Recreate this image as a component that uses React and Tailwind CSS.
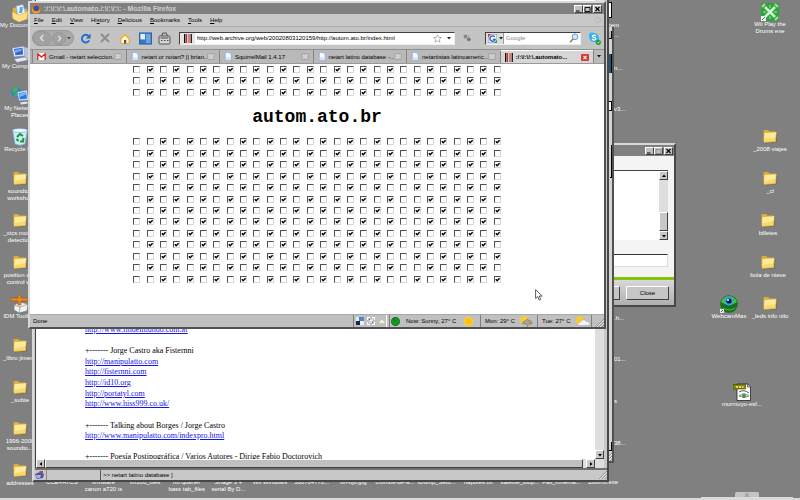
import React from "react";

const UI_FONT = "font-['Liberation_Sans',Arial,sans-serif]";

/* ---------- Desktop icons ---------- */

function Folder() {
  return (
    <svg viewBox="0 0 16 15" className="h-[15px] w-[16px]">
      <path d="M3 14.500 L14.500 13.500 L15.500 5 L14 4 Z" fill="#4d4d4d" opacity=".5" />
      <path d="M1.500 2 Q1.500 1 2.500 1 H6 L7.500 2.500 H13 Q14 2.500 14 3.500 V12 H1.500 Z" fill="#dcae3c" />
      <path d="M2.500 4 L14.500 3.200 L13.700 12.800 L2 13.500 Z" fill="#fdeb9c" />
      <path d="M2.500 10 L14 8 L13.700 12.800 L2 13.500 Z" fill="#f8d96c" />
      <path d="M14.500 3.200 L13.700 12.800 L2 13.500" fill="none" stroke="#b98a2b" strokeWidth=".6" />
    </svg>
  );
}

function Documents() {
  return (
    <svg viewBox="0 0 18 18" className="h-[18px] w-[18px]">
      <path d="M2 4 L8 3 L16 5 L17 15 L8 18 L1 14 Z" fill="#e0b23c" />
      <path d="M5 2 L12 0.500 L15 10 L7 13 Z" fill="#eaf4ff" stroke="#6ba0d8" strokeWidth=".7" />
      <path d="M9 3 L12 3 L11 9 L8 9 Z" fill="#5aa9e6" />
      <path d="M1 8 L9 11 L17 7 L16 15 L8 18 L2 15 Z" fill="#fbe08a" stroke="#cf9c30" strokeWidth=".5" />
    </svg>
  );
}

function Computer() {
  return (
    <svg viewBox="0 0 18 18" className="h-[18px] w-[18px]">
      <path d="M1 3 L13 1 L14 11 L3 12 Z" fill="#dfe6f5" stroke="#6a7bb0" strokeWidth=".6" />
      <path d="M3 4 L11.500 2.700 L12 9.500 L4.500 10.300 Z" fill="#3264c8" />
      <path d="M4 5 L11 3.500 L10 6 L4 8 Z" fill="#79a9f0" />
      <path d="M13 2 L17 3 V14 L14 15 Z" fill="#b9c2dd" />
      <path d="M3 14 L14 12 L17 15 L6 17.500 Z" fill="#e7eaf4" stroke="#7783a8" strokeWidth=".5" />
    </svg>
  );
}

function Network() {
  return (
    <svg viewBox="0 0 18 18" className="h-[18px] w-[18px]">
      <circle cx="5" cy="5" r="5" fill="#2d86d8" />
      <path d="M1 3 Q4 -1 7 1 Q6 5 3 6 Z M3 7 L8 5 L8 9 L4 9 Z" fill="#49b53c" />
      <path d="M6 5 L16 3 L17.500 13 L8 14 Z" fill="#dfe8f5" stroke="#5f78b2" strokeWidth=".6" />
      <path d="M7.500 6.200 L15 4.700 L16 11.500 L9 12.400 Z" fill="#2a78dc" />
      <path d="M8 7 L15 5 L15.300 7 L9 10 Z" fill="#74c1f7" />
      <path d="M9 15.500 L16 14.500 L17 16.500 L10 17.500 Z" fill="#e0e4ee" />
    </svg>
  );
}

function RecycleBin() {
  return (
    <svg viewBox="0 0 18 18" className="h-[18px] w-[18px]">
      <path d="M1.500 2 L16.500 2 L14 16 Q9 18.500 4 16 Z" fill="#cfeaf8" stroke="#6aa8cc" strokeWidth=".7" />
      <ellipse cx="9" cy="2.500" rx="7.500" ry="2" fill="#f0faff" stroke="#65a5cc" strokeWidth=".6" />
      <path d="M6 9 L9 6 L12 8 M12.500 10 L12 13.500 L9 13.500 M7.500 13 L5.500 11" fill="none" stroke="#159a34" strokeWidth="2" />
    </svg>
  );
}

function Toolbox() {
  return (
    <svg viewBox="0 0 18 18" className="h-[18px] w-[18px]">
      <path d="M3 10 L9 7 L17 9 L16 16 L8 18 L3 15 Z" fill="#f2f2f2" stroke="#6d6d6d" strokeWidth=".6" />
      <path d="M3 10 L9 12 L17 9 M9 12 L8 18" fill="none" stroke="#8a8a8a" strokeWidth=".7" />
      <path d="M7 0 H10 V3 H17 V6 H10 V10 H7 V6 H0 V3 H7 Z" fill="#e58a24" stroke="#9c5208" strokeWidth=".6" />
    </svg>
  );
}

function WiiDrums() {
  return (
    <svg viewBox="0 0 18 18" className="h-[18px] w-[18px]">
      <rect width="18" height="18" fill="#2fa33a" />
      <path d="M4 4 L14 14 M14 4 L4 14" stroke="#d4f0d4" strokeWidth="2.600" />
      <path d="M1 4 L4 1 M14 1 L17 4 M17 14 L14 17" stroke="#a5dfa8" strokeWidth="2" />
      <path d="M9 2 V5 M9 13 V16 M2 9 H5 M13 9 H16" stroke="#66c46c" strokeWidth="2" />
      <path d="M0 13 H5 V18 H0 Z" fill="#eef8ee" />
      <path d="M1 17 L4 14" stroke="#555" strokeWidth=".8" />
    </svg>
  );
}

function Webcam() {
  return (
    <svg viewBox="0 0 18 18" className="h-[18px] w-[18px]">
      <circle cx="9" cy="9" r="8.800" fill="#17701c" />
      <path d="M1 7 A8.500 8.500 0 0 1 17 7 Q9 13 1 7" fill="#4cc03e" />
      <circle cx="9" cy="6" r="4.600" fill="#2fa4e6" />
      <circle cx="9" cy="6" r="2.600" fill="#0b1a38" />
      <circle cx="8" cy="5" r="1" fill="#fff" />
      <path d="M3 13 Q9 17 15 13" fill="none" stroke="#58b83c" />
      <path d="M0 14 H4 V18 H0 Z" fill="#e6e6e6" />
      <path d="M1 17 L3 15" stroke="#333" strokeWidth=".8" />
    </svg>
  );
}

function JpgFile() {
  return (
    <svg viewBox="0 0 18 18" className="h-[18px] w-[18px]">
      <path d="M4 1 H15 L17.500 3.500 V17.500 H4 Z" fill="#fff" stroke="#222" strokeWidth=".8" />
      <path d="M14.500 1 V4 H17.500" fill="#ccc" stroke="#222" strokeWidth=".6" />
      <rect x="0" y="1.500" width="12.500" height="4.500" fill="#8a8a00" stroke="#3c3c00" strokeWidth=".6" />
      <path d="M3 4 H5 M6 4 H8 M9 4 H10.500" fill="none" stroke="#f2f2a8" strokeWidth="1.400" />
      <path d="M6 9 Q11 6 16 10" fill="none" stroke="#444" strokeWidth=".9" />
      <path d="M6 13 Q11 8.500 16 13 Q11 16 6 13 Z" fill="#d9eed9" stroke="#444" strokeWidth=".6" />
      <circle cx="11" cy="12.800" r="1.900" fill="#2d9a3a" />
    </svg>
  );
}

const shortcuts = [
  { place: "left-[-20px] top-[3px]", Art: Documents, label: ["My Documents"] },
  { place: "left-[-20px] top-[44px]", Art: Computer, label: ["My Computer"] },
  { place: "left-[-20px] top-[86px]", Art: Network, label: ["My Network", "Places"] },
  { place: "left-[-20px] top-[127px]", Art: RecycleBin, label: ["Recycle Bin"] },
  { place: "left-[-20px] top-[169px]", Art: Folder, label: ["soundtoy", "workshop"] },
  { place: "left-[-20px] top-[211px]", Art: Folder, label: ["_xtcs motion", "detection"] },
  { place: "left-[-20px] top-[253px]", Art: Folder, label: ["position and", "control wii"] },
  { place: "left-[-20px] top-[294px]", Art: Toolbox, label: ["IDM Toolbox"] },
  { place: "left-[-20px] top-[336px]", Art: Folder, label: ["_libro jimena"] },
  { place: "left-[-20px] top-[378px]", Art: Folder, label: ["_subte"] },
  { place: "left-[-20px] top-[419px]", Art: Folder, label: ["1996-2008", "soundto..."] },
  { place: "left-[-20px] top-[461px]", Art: Folder, label: ["addresses"] },
  { place: "left-[730px] top-[2px]", Art: WiiDrums, label: ["Wii Play the", "Drums exe"] },
  { place: "left-[730px] top-[127px]", Art: Folder, label: ["_2008 viajes"] },
  { place: "left-[730px] top-[169px]", Art: Folder, label: ["_cl"] },
  { place: "left-[728px] top-[211px]", Art: Folder, label: ["billetes"] },
  { place: "left-[728px] top-[253px]", Art: Folder, label: ["bola de nieve"] },
  { place: "left-[730px] top-[294px]", Art: Folder, label: ["_leds info nilo"] },
  { place: "left-[689px] top-[294px]", Art: Webcam, label: ["WebcamMax"] },
  { place: "left-[702px] top-[382px]", Art: JpgFile, label: ["murmuyo-esf..."] },
];

function Shortcut({ place, Art, label }) {
  return (
    <div className={`absolute flex w-20 flex-col items-center ${place}`}>
      <div className="flex h-[19px] items-center"><Art /></div>
      <div className="text-center leading-[7px] whitespace-nowrap">
        {label.map((line) => <div key={line}>{line}</div>)}
      </div>
    </div>
  );
}

const bottomRow = [
  ["CCE+ATCS"], ["firmware", "canon a720 is"], ["im100_files"], ["no quarter", "bass tab_files"],
  ["Shage 3 +", "serial By D..."], ["Wii Windows"], ["100704770..."], ["bri-ojo.jpg"],
  ["cromos-de-a..."], ["IDump_Setu..."], ["napoles.txt"], ["satelite_loop..."],
  ["Fall_Kinema..."], ["ZoomIt.exe"],
];

const cutLabels = [
  { place: "top-[31px]", text: "..." },
  { place: "top-[64px]", text: "n..." },
  { place: "top-[105px]", text: "v3..." },
  { place: "top-[314px]", text: ".h..." },
  { place: "top-[355px]", text: "01..." },
  { place: "top-[397px]", text: "s" },
  { place: "top-[439px]", text: "38..." },
];

/* ---------- Window parts ---------- */

function CaptionButtons({ dimMiddle }) {
  const base = "grid h-[8px] w-[9px] place-items-center border border-t-white border-l-white border-r-[#404040] border-b-[#404040] bg-[#c0c0c0]";
  const ink = dimMiddle ? "#8c8c8c" : "#000";
  return (
    <div className="flex">
      <button aria-label="Minimize" className={base}>
        <svg viewBox="0 0 7 6" className="h-[6px] w-[7px]"><path d="M1 5 H4.500" stroke="#000" /></svg>
      </button>
      <button aria-label="Maximize" className={base}>
        <svg viewBox="0 0 7 6" className="h-[6px] w-[7px]"><path d="M1 1.500 H6 V5.500 H1 Z" fill="none" stroke={ink} strokeWidth=".9" /></svg>
      </button>
      <button aria-label="Close window" className={`ml-px ${base}`}>
        <svg viewBox="0 0 7 6" className="h-[6px] w-[7px]"><path d="M1.500 1 L5.500 5 M5.500 1 L1.500 5" stroke="#000" strokeWidth="1.100" /></svg>
      </button>
    </div>
  );
}

function ScrollButton({ dir, label }) {
  const d = { up: "M1 4 L3 1.500 L5 4 Z", down: "M1 2 L3 4.500 L5 2 Z", left: "M4 1 L1.500 3 L4 5 Z", right: "M2 1 L4.500 3 L2 5 Z" }[dir];
  return (
    <button aria-label={label} className="grid h-[9px] w-[9px] shrink-0 place-items-center border border-t-white border-l-white border-r-[#404040] border-b-[#404040] bg-[#c8c8c8]">
      <svg viewBox="0 0 6 6" className="h-[6px] w-[6px]"><path d={d} fill="#000" /></svg>
    </button>
  );
}

function Grip() {
  return (
    <svg viewBox="0 0 8 8" className="h-[8px] w-[8px]">
      <path d="M0 8 L8 0 M3 8 L8 3 M6 8 L8 6" stroke="#808080" strokeWidth=".8" />
      <path d="M1 8 L8 1 M4 8 L8 4" stroke="#fff" strokeWidth=".6" />
    </svg>
  );
}

/* ---------- Firefox ---------- */

const menus = ["File", "Edit", "View", "History", "Delicious", "Bookmarks", "Tools", "Help"];
const accessKey = { History: 2 };

function MenuItem({ name }) {
  const k = accessKey[name] ?? 0;
  return (
    <button>
      {name.slice(0, k)}<span className="underline">{name[k]}</span>{name.slice(k + 1)}
    </button>
  );
}

function Page() {
  return (
    <svg viewBox="0 0 8 10" className="h-[9px] w-[8px] shrink-0">
      <path d="M1 .5 H5.500 L7.500 2.500 V9.500 H1 Z" fill="#f5faff" stroke="#7ba3d8" strokeWidth=".7" />
      <path d="M1.500 6 H7 V9 H1.500 Z" fill="#cfe2fb" />
      <path d="M5.500 .5 V2.500 H7.500" fill="#b5d0f5" />
    </svg>
  );
}

function GmailMark() {
  return (
    <svg viewBox="0 0 9 7" className="h-[7px] w-[9px] shrink-0">
      <rect width="9" height="7" fill="#fff" />
      <path d="M.8 7 V.8 L4.500 4 L8.200 .8 V7" fill="none" stroke="#d8281e" strokeWidth="1.400" />
    </svg>
  );
}

function RedBars() {
  return (
    <svg viewBox="0 0 8 9" className="h-[9px] w-[8px] shrink-0">
      <rect width="8" height="9" fill="#fff" />
      <rect width="1.500" height="9" fill="#111" />
      <rect x="2" width="1" height="9" fill="#b33" />
      <rect x="3.500" width="2.500" height="9" fill="#d98080" />
      <rect x="6.500" width="1.500" height="9" fill="#222" />
    </svg>
  );
}

const tabs = [
  { Mark: GmailMark, title: "Gmail - netart seleccion..." },
  { Mark: Page, title: "netart or notart? || brian..." },
  { Mark: Page, title: "SquirrelMail 1.4.17" },
  { Mark: Page, title: "netart latino database -..." },
  { Mark: Page, title: "netartistas latinoameric..." },
  { Mark: RedBars, title: ":/:\\/:\\/:\\.automato...", active: true },
];

function Tab({ Mark, title, active }) {
  return (
    <div className={`flex min-w-0 flex-1 items-center gap-[3px] border-l border-l-[#858585] px-[4px] ${active ? "border-t border-t-white bg-[#d6d6d6] font-bold" : "bg-[#b9b9b9]"}`}>
      <Mark />
      <button className="min-w-0 flex-1 text-left whitespace-nowrap">{title}</button>
      <button aria-label={`Close tab ${title}`} className={`grid h-[7px] w-[8px] shrink-0 place-items-center rounded-[1px] ${active ? "bg-[#d83a32]" : "border border-[#a6a6a6] bg-[#c4c4c4]"}`}>
        <svg viewBox="0 0 6 5" className="h-[5px] w-[6px]">
          <path d="M1.500 .8 L4.500 4.200 M4.500 .8 L1.500 4.200" stroke={active ? "#fff" : "#d4d4d4"} strokeWidth="1.100" />
        </svg>
      </button>
    </div>
  );
}

const oddRow = [1, 3, 5, 7, 9, 11, 13, 15, 17, 19, 22, 24, 26];
const evenRow = [2, 4, 6, 8, 10, 12, 14, 16, 18, 21, 23, 25, 27];

function CheckGrid({ rows, startEven, size }) {
  const cells = [];
  for (let r = 0; r < rows; r++) {
    const marked = (r % 2 === 0) === startEven ? evenRow : oddRow;
    for (let c = 0; c < 28; c++) {
      cells.push(
        <span key={`${r}-${c}`} className="grid place-items-center">
          <input
            type="checkbox"
            aria-label={`Row ${r + 1}, box ${c + 1}`}
            defaultChecked={marked.includes(c)}
            className="peer col-start-1 row-start-1 h-[7px] w-[7px] appearance-none border border-t-[#505050] border-l-[#505050] border-r-[#d8d8d8] border-b-[#d8d8d8] bg-white"
          />
          <svg viewBox="0 0 7 7" className="pointer-events-none col-start-1 row-start-1 hidden h-[7px] w-[7px] peer-checked:block">
            <path d="M1.800 3.200 L3.200 4.800 L5.600 2.200" fill="none" stroke="#000" strokeWidth="1.400" />
          </svg>
        </span>
      );
    }
  }
  return <div className={`grid w-[374px] auto-rows-fr grid-cols-28 ${size}`}>{cells}</div>;
}

function Sun() {
  return (
    <svg viewBox="0 0 12 12" className="h-[11px] w-[11px] shrink-0">
      <circle cx="6" cy="6" r="5.300" fill="#f6d04a" opacity=".8" />
      <circle cx="6" cy="6" r="3.800" fill="#ffc400" />
    </svg>
  );
}

function Storm() {
  return (
    <svg viewBox="0 0 14 11" className="h-[11px] w-[14px] shrink-0">
      <circle cx="5" cy="4" r="3.800" fill="#ffc928" />
      <path d="M4 8 Q3 5 6 5 Q8 2 10.500 4.500 Q13.500 4.500 13 8 Z" fill="#a8a8a8" stroke="#666" strokeWidth=".5" />
      <path d="M9 6 L7.500 8.500 H9 L8 11 L11 7.800 H9.500 L10.500 6 Z" fill="#ffde3a" stroke="#6e5600" strokeWidth=".4" />
    </svg>
  );
}

function Cloudy() {
  return (
    <svg viewBox="0 0 16 11" className="h-[11px] w-[16px] shrink-0">
      <circle cx="5" cy="4.500" r="4" fill="#ffc928" />
      <path d="M3 9 Q2 6 5.500 6 Q8 2 11 5 Q15.500 5.500 15 9.500 H4 Z" fill="#f4f4f4" stroke="#9a9a9a" strokeWidth=".5" />
    </svg>
  );
}

function Firefox() {
  const panel = "flex h-full items-center border-l border-l-[#808080] whitespace-nowrap";
  return (
    <main className="absolute top-[1px] left-[28px] flex h-[328px] w-[578px] flex-col border-2 border-t-[#d8d8d8] border-l-[#d8d8d8] border-r-[#505050] border-b-[#505050] bg-[#c0c0c0] text-black">
      <header className="flex h-[11px] items-center bg-[#808080] pr-[2px] pl-px text-[#d0d0d0]">
        <svg viewBox="0 0 10 10" className="h-[10px] w-[10px]">
          <circle cx="5" cy="5" r="4.600" fill="#e0701a" />
          <circle cx="5.300" cy="4.300" r="2.800" fill="#2a55b0" />
          <path d="M1 3 Q2 8 6 7.500 Q9 7 9 4 Q10 9 5 9.600 Q0 9 1 3" fill="#f6a021" />
        </svg>
        <h1 className="ml-[3px] flex-1 text-[7px] leading-[11px] font-bold whitespace-pre">{":/:\\/:\\/:\\.automato./:\\/:\\/:\\: - Mozilla Firefox"}</h1>
        <CaptionButtons />
      </header>

      <nav className="flex h-[13px] items-center justify-between border-b border-b-[#adadad] bg-[#c8c8c8] pr-[3px] pl-[4px]">
        <div className="flex gap-[8px]">{menus.map((m) => <MenuItem key={m} name={m} />)}</div>
        <span className="h-[6px] w-[6px] rounded-full border border-dotted border-[#ababab]" />
      </nav>

      <div className="flex h-[22px] items-center bg-[#c4c4c4] pr-[3px] pl-[2px]">
        <div className="flex h-[16px] w-[42px] items-center gap-px rounded-full border border-[#999] bg-[#aaaaaa]">
          <button aria-label="Back" className="grid h-[15px] w-[18px] place-items-center rounded-full border border-[#979797] bg-[#a2a2a2]">
            <svg viewBox="0 0 8 8" className="h-[8px] w-[8px]"><path d="M5.500 1 L2.500 4 L5.500 7" fill="none" stroke="#e4e4e4" strokeWidth="1.400" /></svg>
          </button>
          <button aria-label="Forward" className="grid h-[13px] w-[14px] place-items-center rounded-full border border-[#979797] bg-[#a2a2a2]">
            <svg viewBox="0 0 8 8" className="h-[7px] w-[7px]"><path d="M2.500 1 L5.500 4 L2.500 7" fill="none" stroke="#e4e4e4" strokeWidth="1.400" /></svg>
          </button>
          <svg viewBox="0 0 4 3" className="h-[3px] w-[4px]"><path d="M0 0 H4 L2 2.500 Z" fill="#555" /></svg>
        </div>
        <div className="ml-[6px] flex flex-1 items-center">
          <button aria-label="Reload">
            <svg viewBox="0 0 12 12" className="h-[11px] w-[11px]">
              <path d="M9.500 3.500 A4.200 4.200 0 1 0 10 8" fill="none" stroke="#2468d0" strokeWidth="2" />
              <path d="M11.500 .5 V6 H6.500 Z" fill="#2468d0" />
            </svg>
          </button>
          <button aria-label="Stop" className="ml-[9px]">
            <svg viewBox="0 0 10 10" className="h-[10px] w-[10px]"><path d="M1 1 L9 9 M9 1 L1 9" stroke="#8c8c8c" strokeWidth="1.800" /></svg>
          </button>
          <button aria-label="Home" className="ml-[9px]">
            <svg viewBox="0 0 12 11" className="h-[11px] w-[12px]">
              <path d="M2 5.500 V10.500 H10 V5.500 L6 2 Z" fill="#fff6dc" stroke="#b98a2a" strokeWidth=".6" />
              <path d="M.3 6 L6 .5 L11.700 6 L10.500 7 L6 2.800 L1.500 7 Z" fill="#f0b429" />
              <rect x="5" y="7" width="2.200" height="3.500" fill="#7a4a20" />
            </svg>
          </button>
          <button aria-label="Sidebar" className="ml-[8px]">
            <svg viewBox="0 0 14 13" className="h-[13px] w-[13px]">
              <rect x=".5" y=".5" width="13" height="12" fill="#3774c4" stroke="#2a5ea5" />
              <rect x="1.500" y="1.500" width="5" height="6" fill="#e3effc" />
              <rect x="7.500" y="1.500" width="5" height="10" fill="#6ea3e2" />
            </svg>
          </button>
          <button aria-label="Tag" className="ml-[6px]">
            <svg viewBox="0 0 13 13" className="h-[13px] w-[13px]">
              <path d="M3.500 4 L5 1 H8 L9.500 4" fill="none" stroke="#555" strokeWidth="1.100" />
              <rect x="1" y="4" width="11" height="8" rx="1" fill="#d6d6d6" stroke="#555" />
              <path d="M2.500 6 H10.500 M3 8.500 H4.500 M6 8.500 H7.500 M9 8.500 H10.500" stroke="#444" strokeWidth="1.200" />
            </svg>
          </button>
          <div className="ml-[8px] flex h-[13px] flex-1 items-center border border-t-[#404040] border-l-[#404040] border-r-[#eee] border-b-[#eee] bg-white">
            <span className="grid h-full w-[15px] place-items-center bg-[#e4e4e4]"><RedBars /></span>
            <input aria-label="Address" defaultValue="http://web.archive.org/web/20020803120159/http://autom.ato.br/index.html" className="ml-[2px] min-w-0 flex-1 bg-transparent outline-none" />
            <svg viewBox="0 0 10 10" className="h-[9px] w-[9px]"><path d="M5 .8 L6.200 3.800 L9.400 4 L7 6 L7.800 9.200 L5 7.500 L2.200 9.200 L3 6 L.6 4 L3.800 3.800 Z" fill="#fff" stroke="#999" strokeWidth=".8" /></svg>
            <svg viewBox="0 0 4 3" className="mr-[3px] ml-[5px] h-[3px] w-[4px]"><path d="M0 0 H4 L2 2.500 Z" fill="#222" /></svg>
          </div>
          <svg viewBox="0 0 8 8" className="ml-[8px] h-[8px] w-[8px]">
            <circle cx="2.500" cy="2.500" r="1.900" fill="#888" /><circle cx="5.800" cy="5.300" r="1.900" fill="#777" /><circle cx="5.800" cy="2" r="1" fill="#aaa" />
          </svg>
          <div className="ml-[14px] flex h-[13px] w-[96px] items-center border border-t-[#404040] border-l-[#404040] border-r-[#eee] border-b-[#eee] bg-white">
            <span className="flex h-full w-[18px] items-center gap-[2px] border-r border-r-[#999] bg-[#ddd] pl-[2px]">
              <svg viewBox="0 0 10 10" className="h-[9px] w-[9px]">
                <rect width="10" height="10" fill="#f2f5fb" stroke="#5b80c8" />
                <path d="M0 0 H3.500 L0 4 Z" fill="#d33" /><path d="M6.500 10 H10 V6.500 Z" fill="#2ca048" />
                <path d="M7.500 3.200 A3 3 0 1 0 8 6 H5.500" fill="none" stroke="#2f62c8" strokeWidth="1.500" />
              </svg>
              <svg viewBox="0 0 4 3" className="h-[3px] w-[4px]"><path d="M0 0 H4 L2 2.500 Z" fill="#222" /></svg>
            </span>
            <input aria-label="Search" placeholder="Google" className="ml-[2px] min-w-0 flex-1 bg-transparent outline-none placeholder:text-[#888]" />
            <svg viewBox="0 0 10 10" className="mr-px h-[10px] w-[10px]">
              <circle cx="6" cy="3.800" r="2.900" fill="#cfe6ff" stroke="#6a9bd0" />
              <path d="M4 6 L1 9.200" stroke="#b8702a" strokeWidth="1.600" />
            </svg>
          </div>
          <button aria-label="Skype" className="ml-[7px]">
            <svg viewBox="0 0 13 13" className="h-[13px] w-[13px]">
              <circle cx="4" cy="3.500" r="3" fill="#35b2ee" /><circle cx="8" cy="7.500" r="3" fill="#35b2ee" /><circle cx="6" cy="5.500" r="4.600" fill="#35b2ee" />
              <path d="M8 3.800 Q6 2.500 4.500 3.600 Q4 5 6 5.400 Q8.500 6 7.600 7.500 Q6 8.600 4 7.200" fill="none" stroke="#fff" strokeWidth="1.200" />
              <circle cx="10.300" cy="10.300" r="2.600" fill="#1e9a32" />
              <path d="M9 10.300 L10 11.300 L11.600 9.300" fill="none" stroke="#fff" strokeWidth=".7" />
            </svg>
          </button>
        </div>
      </div>

      <div className="flex h-[15px] border-t border-t-[#8f8f8f] border-b border-b-[#999] bg-[#b0b0b0] pl-[2px]">
        {tabs.map((t) => <Tab key={t.title} {...t} />)}
        <button aria-label="List all tabs" className="grid w-[11px] place-items-center border-l border-l-[#858585] bg-[#bbb]">
          <svg viewBox="0 0 4 3" className="h-[3px] w-[4px]"><path d="M0 0 H4 L2 2.500 Z" fill="#111" /></svg>
        </button>
      </div>

      <section className="flex min-h-0 flex-1 flex-col items-center bg-white">
        <CheckGrid rows={3} startEven={false} size="h-[34px]" />
        <h2 className="my-[8px] font-['Liberation_Mono',monospace] text-[18px] leading-[22px] font-bold">autom.ato.br</h2>
        <CheckGrid rows={13} startEven size="h-[149px]" />
      </section>

      <footer className="flex h-[13px] shrink-0 items-center border-t border-t-[#a8a8a8] bg-[#c0c0c0] pl-[3px]">
        <span className="flex-1">Done</span>
        <div className={`${panel} mr-[2px] w-[34px] gap-[3px] border-r border-r-white pl-[2px]`}>
          <svg viewBox="0 0 8 8" className="h-[8px] w-[8px]"><rect width="8" height="8" fill="#e6eef8" /><rect width="5" height="4" x="3" fill="#4d86c8" /><rect width="4" height="4" y="4" fill="#1b2740" /></svg>
          <svg viewBox="0 0 8 8" className="h-[8px] w-[8px]"><path d="M.5 3 V.5 H3 M5 .5 H7.500 V3 M7.500 5 V7.500 H5 M3 7.500 H.5 V5 M2.500 2.500 L5.500 5.500 M5.500 2.500 L2.500 5.500" fill="none" stroke="#fff" strokeWidth="1.200" /><path d="M2 2 L3 3 M6 6 L5 5" stroke="#555" /></svg>
          <svg viewBox="0 0 8 8" className="h-[8px] w-[8px]"><path d="M1 5 L4 2 L7 5 V6.500 H1 Z" fill="#f6f0d8" stroke="#aaa" strokeWidth=".4" /></svg>
        </div>
        <div className={`${panel} w-[91px] pl-px`}>
          <svg viewBox="0 0 10 10" className="h-[9px] w-[9px]"><circle cx="5" cy="5" r="4.600" fill="#129a1c" stroke="#0b4d10" strokeWidth=".7" /><path d="M5 5 L2.500 1.500" stroke="#063" strokeWidth=".8" /></svg>
          <span className="ml-[6px] flex-1">Now: Sunny, 27° C</span>
          <Sun />
          <span className="w-[6px]" />
        </div>
        <div className={`${panel} w-[57px] justify-between px-[4px]`}><span>Mon: 29° C</span><Storm /></div>
        <div className={`${panel} w-[54px] justify-between pl-[4px]`}><span>Tue: 27° C</span><Cloudy /></div>
        <div className={`${panel} w-[13px] items-end justify-end`}><Grip /></div>
      </footer>
    </main>
  );
}

/* ---------- Other windows ---------- */

const linkLines = [
  { href: "http://www.findelmundo.com.ar" },
  {},
  { text: "+------- Jorge Castro aka Fisternni" },
  { href: "http://manipulatto.com" },
  { href: "http://fisternni.com" },
  { href: "http://id10.org" },
  { href: "http://portatyl.com" },
  { href: "http://www.hiss999.co.uk/" },
  {},
  { text: "+------- Talking about Borges / Jorge Castro" },
  { href: "http://www.manipulatto.com/indexpro.html" },
  {},
  { text: "+------- Poesía Postipográfica / Varios Autores - Dirige Fabio Doctorovich" },
];

function NetartWindow() {
  return (
    <section className="absolute top-[-2px] left-[32px] flex h-[484px] w-[577px] flex-col border-2 border-t-[#dcdcdc] border-l-[#d8d8d8] border-r-[#484848] border-b-[#484848] bg-[#c8c8c8] pl-px text-black">
      <div className="mr-[3px] flex min-h-0 flex-1 border-l border-l-[#404040]">
        <div className="min-w-0 flex-1 bg-white pt-[325px] pl-[49px]">
          <div className="grid h-[138px] auto-rows-fr font-['Liberation_Serif',serif] text-[8px] leading-[10px]">
            {linkLines.map((l, i) => (
              <p key={i}>{l.href ? <a href={l.href} className="text-[#1414e6] underline">{l.href}</a> : l.text}</p>
            ))}
          </div>
        </div>
        <div className="flex w-[9px] flex-col justify-end bg-[#dedede]"><ScrollButton dir="down" label="Scroll down" /></div>
      </div>
      <div className="relative mr-[3px] flex h-[9px] border-l border-l-[#404040] bg-[#dedede] pr-[9px]">
        <ScrollButton dir="left" label="Scroll left" />
        <div className="mr-[3px] flex-1 border border-t-white border-l-white border-r-[#404040] border-b-[#404040] bg-[#c0c0c0]" />
        <ScrollButton dir="right" label="Scroll right" />
      </div>
      <footer className="flex h-[12px] items-center border-t-2 border-t-[#707070]">
        <svg viewBox="0 0 9 8" className="h-[8px] w-[9px]"><path d="M0 3 L5 1 L9 3 L8 7 L2 8 Z" fill="#4a55a8" /><path d="M4 0 H8 V4 Z" fill="#b04a4a" /><path d="M1 4 L6 4 L5 7 L2 7 Z" fill="#a8b4ec" /></svg>
        <span className="ml-[2px] h-full w-[54px] border-l border-l-[#888]" />
        <span className="h-full flex-1 border-l border-l-[#555] pl-[2px] leading-[10px]">&gt;&gt; netart latino database ]</span>
        <Grip />
      </footer>
    </section>
  );
}

function BackWindow() {
  return (
    <section className="absolute top-[27px] left-[560px] flex h-[436px] w-[54px] flex-col items-end border-r-2 border-b-2 border-r-[#505050] border-b-[#505050] bg-[#d4d4d4]">
      <span className="mt-[4px] h-[8px] w-[4px] border-r border-b border-r-black border-b-black bg-[#c0c0c0]" />
      <span className="mt-[15px] h-[19px] w-[4px] border-r border-r-black bg-[#1c5a78]" />
      <span className="mt-[28px] h-[10px] w-[4px] border border-black bg-white" />
      <span className="mt-[34px] h-[33px] w-[2px] border-r border-b border-r-black border-b-black" />
      <span className="flex-1" />
      <span className="mb-[2px] h-[9px] w-[3px] border-r border-b border-r-black border-b-black" />
      <Grip />
    </section>
  );
}

function Dialog() {
  const btn = "h-[14px] w-[43px] border border-t-white border-l-white border-r-[#404040] border-b-[#404040] bg-[#c6c6c6] leading-[12px]";
  return (
    <section className="absolute top-[143px] left-[560px] flex h-[164px] w-[116px] flex-col border-2 border-t-[#d8d8d8] border-l-[#d8d8d8] border-r-[#484848] border-b-[#484848] bg-[#f4f4f4] text-black">
      <header className="flex h-[11px] items-center justify-end bg-[#808080] pr-px"><CaptionButtons dimMiddle /></header>
      <div className="mt-[14px] mr-[6px] flex h-[70px] justify-end border-t border-t-[#444] bg-white">
        <div className="flex w-[9px] flex-col bg-[#dedede]">
          <ScrollButton dir="up" label="Scroll up" />
          <span className="flex-1" />
          <span className="h-[19px] border border-t-white border-l-white border-r-[#404040] border-b-[#404040] bg-[#c8c8c8]" />
          <ScrollButton dir="down" label="Scroll down" />
        </div>
      </div>
      <input aria-label="Message" className="mt-[14px] mr-[6px] h-[13px] border border-t-[#333] border-r-[#ddd] border-b-[#ddd] bg-white" />
      <div className="mt-[10px] h-[3px] bg-[#84c40c]" />
      <footer className="flex flex-1 items-center justify-end gap-[6px] bg-gradient-to-b from-[#d8d8d8] to-[#b0b0b0] pr-[5px]">
        <button aria-label="Send" className={btn} />
        <button className={btn}>Close</button>
      </footer>
    </section>
  );
}

export default function App() {
  return (
    <div className={`relative h-screen w-full overflow-hidden bg-[#808080] text-[6px] leading-[8px] text-white ${UI_FONT}`}>
      {shortcuts.map((s) => <Shortcut key={s.place} {...s} />)}
      <div className="absolute top-[479px] left-[41px] grid w-[583px] grid-cols-14 text-center leading-[7px] whitespace-nowrap">
        {bottomRow.map((lines) => (
          <div key={lines[0]} className="flex flex-col items-center">{lines.map((l) => <div key={l}>{l}</div>)}</div>
        ))}
      </div>
      {cutLabels.map((c) => <span key={c.place} className={`absolute left-[614px] ${c.place}`}>{c.text}</span>)}
      <div className="absolute top-[2px] left-[604px] h-[16px] w-[8px] border border-black bg-white" />
      <span className="absolute top-[21px] left-[609px]">tem</span>
      <Dialog />
      <BackWindow />
      <NetartWindow />
      <Firefox />
      <svg viewBox="0 0 8 12" className="absolute top-[289px] left-[535px] h-[12px] w-[8px]">
        <path d="M.6 .6 V9.500 L2.700 7.600 L4.200 11.200 L5.700 10.500 L4.200 7.100 H7.200 Z" fill="#fff" stroke="#333" strokeWidth=".8" />
      </svg>
      <div className="absolute inset-x-0 bottom-0 h-[2px] bg-[#dadada]" />
      <div className="absolute bottom-[2px] left-[701px] flex w-[92px] justify-center border-b border-b-[#dadada]">
        <span className="grid h-[5px] w-[24px] place-items-center rounded-t-[2px] bg-[#c4c4c4]">
          <svg viewBox="0 0 6 4" className="h-[4px] w-[6px]"><path d="M1 2 L3 .5 L5 2 M1 4 L3 2.500 L5 4" fill="none" stroke="#777" strokeWidth=".7" /></svg>
        </span>
      </div>
    </div>
  );
}
